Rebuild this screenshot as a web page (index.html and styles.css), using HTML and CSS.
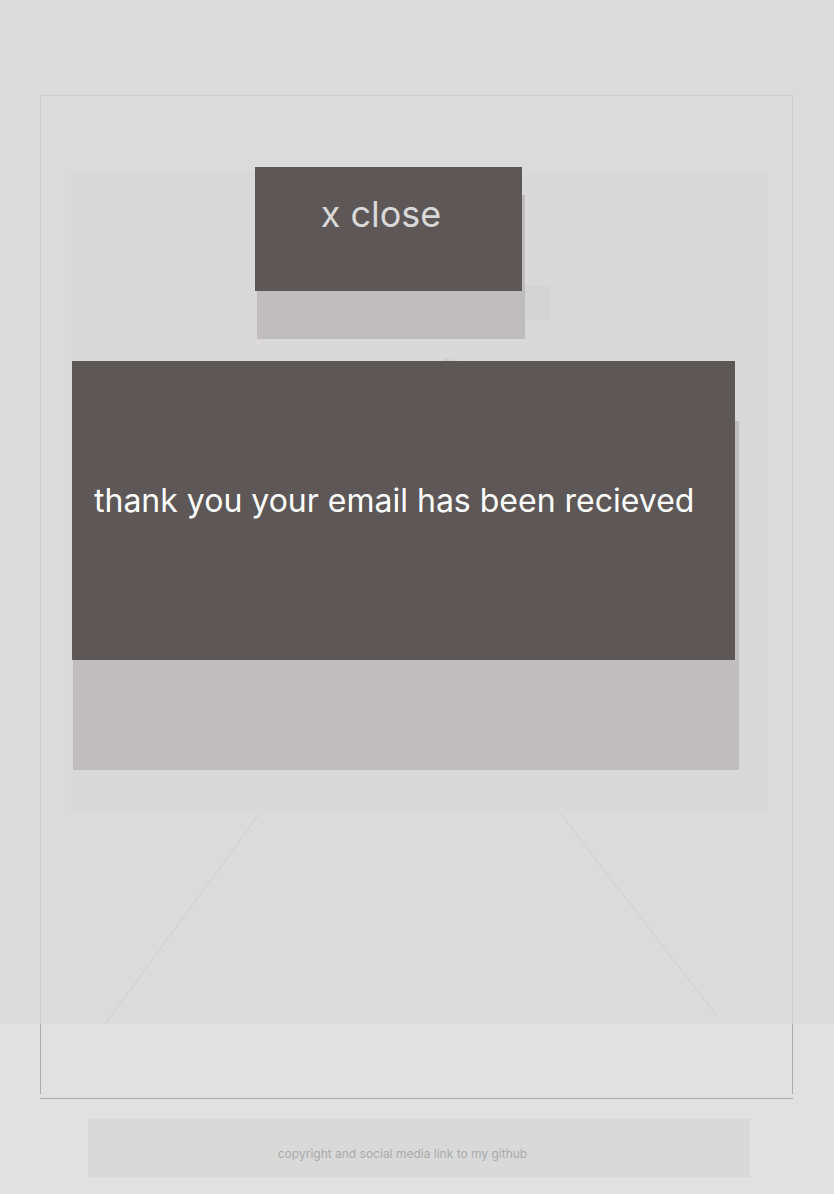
FILE: index.html
```html
<!DOCTYPE html>
<html lang="en">
<head>
<meta charset="utf-8">
<meta name="viewport" content="width=device-width, initial-scale=1">
<title>Email received</title>
<link rel="stylesheet" href="styles.css">
</head>
<body>
<div class="page">
  <main class="frame">
    <div class="frame-body">
      <section class="panel">
        <div class="panel-bar"></div>
        <h1 class="panel-title">email</h1>
      </section>
      <svg class="floor" viewBox="0 0 751 281" preserveAspectRatio="none" aria-hidden="true">
        <path d="M219 0 64 211M519 0 675 202"/>
      </svg>
    </div>
  </main>
  <footer class="footer">
    <p class="footer-text">copyright and social media link to my github</p>
  </footer>
  <div class="overlay" role="dialog" aria-labelledby="message">
    <button class="block close" type="button">x close</button>
    <div class="block message"><p class="message-text" id="message">thank you your email has been recieved</p></div>
  </div>
</div>
</body>
</html>
```

FILE: styles.css
```css
* {
  box-sizing: border-box;
}

body {
  margin: 0;
  background: #e1e1e1;
  font-family: Inter, "Liberation Sans", sans-serif;
}

p,
h1 {
  margin: 0;
}

.page {
  position: relative;
  padding: 95px 41px 17px 40px;
}

.frame {
  padding-bottom: 4px;
  border-bottom: 1px solid #aaa;
}

.frame-body {
  border: 1px solid #aaa;
  border-bottom: 0;
  padding-top: 76px;
}

.panel {
  height: 641px;
  margin: 0 24px 0 25px;
  padding-top: 113px;
  background: #d9d9d9;
}

.panel-bar {
  width: 30%;
  height: 35px;
  margin-left: 39%;
  background: #c3c3c3;
}

.panel-title {
  width: 56%;
  margin-top: 30px;
  color: #aaa;
  font-size: 36px;
  line-height: 44px;
  font-weight: 400;
  text-align: right;
}

.floor {
  display: block;
  width: 100%;
  height: 281px;
  fill: none;
  stroke: #aaa;
}

.footer {
  margin: 20px 43px 0 48px;
  padding: 27px 33px 15px 0;
  background: #d9d9d9;
}

.footer-text {
  color: #aaa;
  font-size: 12px;
  line-height: 16px;
  text-align: center;
}

.overlay {
  position: absolute;
  inset: 0 0 auto;
  z-index: 0;
  display: flex;
  flex-direction: column;
  gap: 70px;
  padding: 167px 99px 364px 72px;
  background: rgba(217, 217, 217, 0.78);
}

/* A solid block over a pale slab that drops out below it. */
.block {
  position: relative;
  background: #5d5757;
}

.block::before {
  content: "";
  position: absolute;
  z-index: -1;
  background: #bfbdbe;
}

.close {
  align-self: center;
  width: 267px;
  height: 124px;
  margin-right: 30px;
  padding: 0 15px 30px 0;
  border: 0;
  color: #d9d9d9;
  font: inherit;
  font-size: 36px;
  line-height: 44px;
}

.close::before {
  inset: 28px -3px -48px 2px;
}

.message {
  display: flex;
  align-items: center;
  min-height: 299px;
  padding: 0 22px 20px;
}

.message::before {
  inset: 60px -4px -110px 1px;
}

.message-text {
  color: #fff;
  font-size: 32px;
  line-height: 40px;
}
```
